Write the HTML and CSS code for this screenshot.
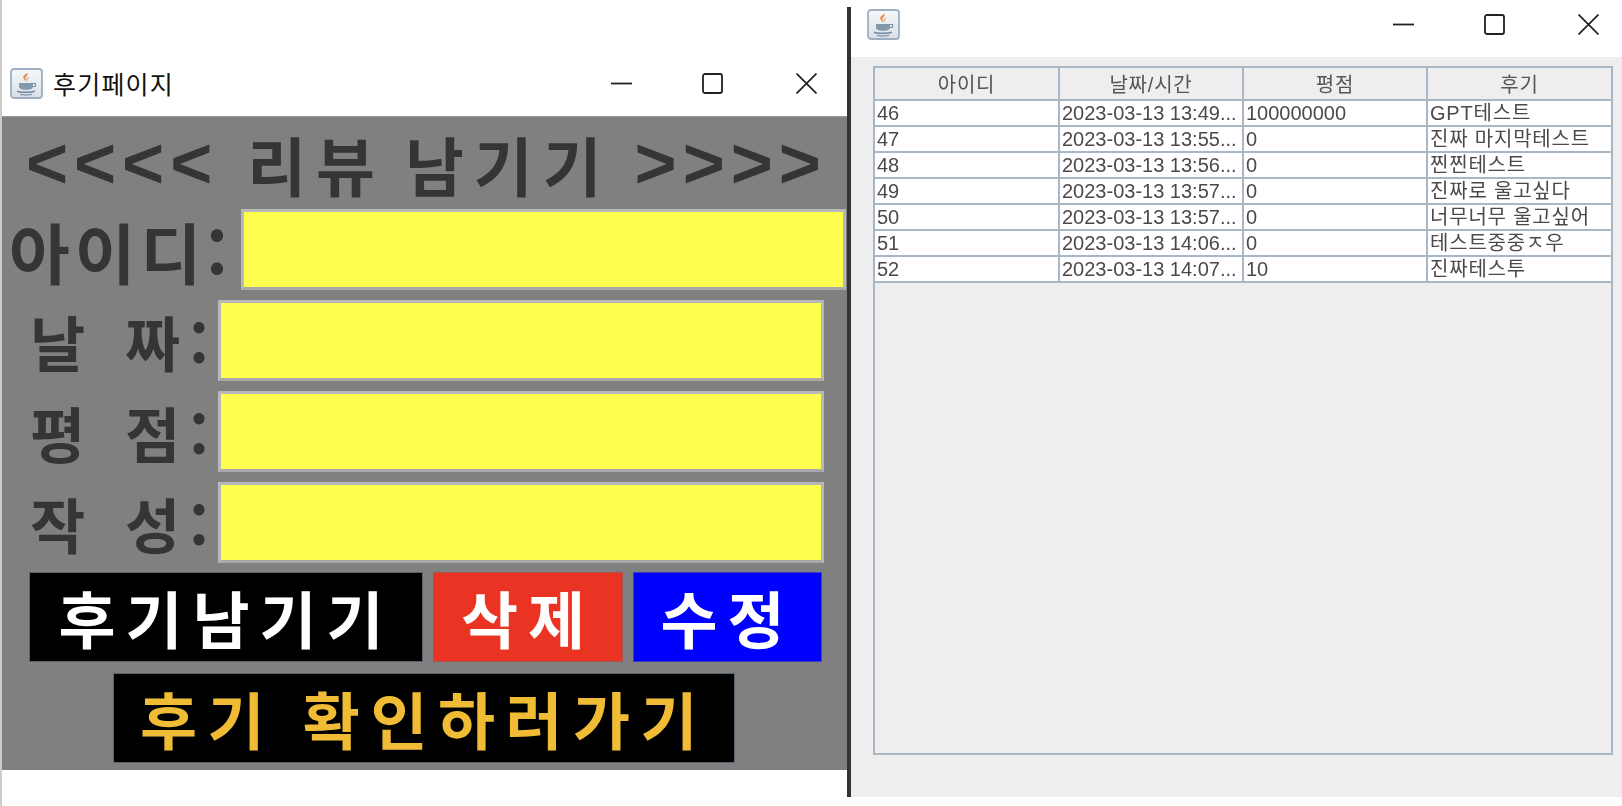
FILE: index.html
```html
<!DOCTYPE html>
<html lang="ko">
<head>
    <meta charset="UTF-8">
    <meta name="viewport" content="width=device-width, initial-scale=1.0">
    <title>후기페이지</title>
    <link rel="stylesheet" href="styles.css">
</head>
<body>
    <svg class="sprite" width="0" height="0">
        <defs>
            <linearGradient id="iconbg" x1="0" y1="0" x2="0" y2="1">
                <stop offset="0" stop-color="#f6f8fa"/>
                <stop offset="1" stop-color="#d9e0e6"/>
            </linearGradient>
            <symbol id="java" viewBox="0 0 33 31">
                <rect x="1" y="1" width="31" height="29" rx="3" fill="url(#iconbg)" stroke="#9db0c2" stroke-width="1.800"/>
                <path d="M17.500 4.500c1.500 2.500-3 4-2 6.500.4 1 1.200 1.800 1.500 2.500-2.800-1.500-4.500-3.300-3.500-5.500.7-1.400 3.500-2 4-3.500z" fill="#e8894a"/>
                <path d="M19.500 8.500c-.5 1.500-2 2-1.800 3.200.1.600.5 1 .8 1.300-1.500-.6-2.500-1.600-1.900-2.800.5-.8 2.300-1 2.900-1.700z" fill="#eca777"/>
                <path d="M9 15h14v3.500c0 2.200-2.500 3.200-7 3.200s-7-1-7-3.200z" fill="#8298ac"/>
                <path d="M23 15.500h2.500v3H23" fill="none" stroke="#7e94a8" stroke-width="1.200"/>
                <path d="M7 23.200c3.500 1.400 14 1.400 18 0" fill="none" stroke="#7189a0" stroke-width="1.600"/>
                <path d="M10 26.200c3 .8 9 .8 12 0" fill="none" stroke="#8ea2b5" stroke-width="1.400"/>
            </symbol>
            <symbol id="win-min" viewBox="0 0 21 21">
                <path d="M0 10.500h21" stroke="#222" stroke-width="1.800"/>
            </symbol>
            <symbol id="win-max" viewBox="0 0 21 21">
                <rect x="1" y="1" width="19" height="19" rx="2" fill="none" stroke="#222" stroke-width="1.800"/>
            </symbol>
            <symbol id="win-close" viewBox="0 0 21 21">
                <path d="M.5.500l20 20M20.500.500l-20 20" stroke="#222" stroke-width="1.700"/>
            </symbol>
        </defs>
    </svg>

    <div class="review-window">
        <div class="titlebar review-titlebar">
            <svg class="app-icon"><use href="#java"/></svg>
            <span class="window-title">후기페이지</span>
            <div class="window-buttons">
                <svg class="win-btn"><use href="#win-min"/></svg>
                <svg class="win-btn"><use href="#win-max"/></svg>
                <svg class="win-btn win-btn-close"><use href="#win-close"/></svg>
            </div>
        </div>
        <div class="review-panel">
            <h1 class="heading">
                <span class="arrows arrows-left">&lt;&lt;&lt;&lt;</span>
                <span class="heading-words">
                    <span>리뷰</span>
                    <span>남기기</span>
                </span>
                <span class="arrows arrows-right">&gt;&gt;&gt;&gt;</span>
            </h1>
            <div class="row row-id">
                <label class="field-label label-id">아이디:</label>
                <div class="field"></div>
            </div>
            <div class="row">
                <label class="field-label">날 짜:</label>
                <div class="field"></div>
            </div>
            <div class="row">
                <label class="field-label">평 점:</label>
                <div class="field"></div>
            </div>
            <div class="row row-last">
                <label class="field-label">작 성:</label>
                <div class="field"></div>
            </div>
            <div class="actions">
                <button class="btn btn-save">후기남기기</button>
                <button class="btn btn-delete">삭제</button>
                <button class="btn btn-edit">수정</button>
            </div>
            <button class="btn btn-go">후기 확인하러가기</button>
        </div>
    </div>

    <div class="divider"></div>

    <div class="list-window">
        <div class="titlebar list-titlebar">
            <svg class="app-icon"><use href="#java"/></svg>
            <div class="window-buttons">
                <svg class="win-btn"><use href="#win-min"/></svg>
                <svg class="win-btn"><use href="#win-max"/></svg>
                <svg class="win-btn win-btn-close"><use href="#win-close"/></svg>
            </div>
        </div>
        <div class="list-content">
            <div class="table-frame">
                <table class="review-table">
                    <thead>
                        <tr><th class="kr">아이디</th><th class="kr">날짜/시간</th><th class="kr">평점</th><th class="kr">후기</th></tr>
                    </thead>
                    <tbody>
                        <tr><td>46</td><td>2023-03-13 13:49...</td><td>100000000</td><td class="kr">GPT테스트</td></tr>
                        <tr><td>47</td><td>2023-03-13 13:55...</td><td>0</td><td class="kr">진짜 마지막테스트</td></tr>
                        <tr><td>48</td><td>2023-03-13 13:56...</td><td>0</td><td class="kr">찐찐테스트</td></tr>
                        <tr><td>49</td><td>2023-03-13 13:57...</td><td>0</td><td class="kr">진짜로 울고싶다</td></tr>
                        <tr><td>50</td><td>2023-03-13 13:57...</td><td>0</td><td class="kr">너무너무 울고싶어</td></tr>
                        <tr><td>51</td><td>2023-03-13 14:06...</td><td>0</td><td class="kr">테스트중중ㅈ우</td></tr>
                        <tr><td>52</td><td>2023-03-13 14:07...</td><td>10</td><td class="kr">진짜테스투</td></tr>
                    </tbody>
                </table>
            </div>
        </div>
    </div>
</body>
</html>
```

FILE: styles.css
```css
* {
    box-sizing: border-box;
}
html, body {
    margin: 0;
    height: 806px;
    overflow: hidden;
}
body {
    display: flex;
    background-color: #fff;
    font-family: "Noto Sans CJK KR", "Noto Sans", sans-serif;
    filter: blur(0.6px);
}
.sprite {
    position: absolute;
}

/* window chrome */
.titlebar {
    display: flex;
    align-items: center;
    background-color: #fff;
}
.app-icon {
    width: 33px;
    height: 31px;
    flex: none;
}
.window-title {
    margin-left: 10px;
    font-size: 25px;
    line-height: 30px;
    letter-spacing: 1.200px;
    color: #111;
}
.window-buttons {
    display: flex;
    gap: 70px;
    margin-left: auto;
}
.win-btn {
    width: 21px;
    height: 21px;
}
.win-btn-close {
    margin-left: 3px;
}

/* left window */
.review-window {
    width: 847px;
    height: 806px;
    padding-top: 50px;
    border-left: 2px solid #ccc;
}
.review-titlebar {
    height: 66px;
    padding: 0 30px 0 8px;
}
.review-panel {
    display: flex;
    flex-direction: column;
    height: 654px;
    background-color: #808080;
    border-top: 1px solid #999;
}
.heading {
    display: flex;
    align-items: center;
    height: 92px;
    margin: 0;
    padding: 0 0 0 24px;
    font-size: 64px;
    line-height: 1;
    font-weight: 700;
    letter-spacing: 10px;
    white-space: nowrap;
    color: #353535;
}
.heading .arrows {
    font-family: "Liberation Sans", sans-serif;
    font-size: 72px;
    letter-spacing: 6px;
}
.arrows-left {
    margin-right: 29px;
}
.arrows-right {
    margin-left: 23px;
}
.heading-words {
    display: flex;
    gap: 20px;
}
.row {
    display: flex;
    align-items: center;
    height: 81px;
    margin-bottom: 10px;
    padding-left: 28px;
}
.row-id {
    padding-left: 7px;
}
.row-last {
    margin-bottom: 9px;
}
.field-label {
    width: 188px;
    font-size: 60px;
    line-height: 1;
    font-weight: 700;
    letter-spacing: 9px;
    word-spacing: 5px;
    white-space: nowrap;
    color: #353535;
}
.label-id {
    width: 232px;
    font-size: 66px;
    letter-spacing: 5px;
}
.field {
    width: 606px;
    height: 81px;
    background-color: #ffff50;
    border: 3px solid #b8b8b8;
    border-bottom-color: #a8a8a8;
}
.row-id .field {
    width: 605px;
}
.actions {
    display: flex;
    gap: 10px;
    margin-bottom: 11px;
    padding-left: 27px;
}
.btn {
    display: block;
    height: 90px;
    padding: 0;
    border: 1px solid #5a6470;
    font-family: inherit;
    font-size: 62px;
    line-height: 1;
    font-weight: 700;
    letter-spacing: 10px;
    white-space: nowrap;
    color: #fff;
}
.btn-save {
    width: 394px;
    background-color: #000;
}
.btn-delete {
    width: 190px;
    background-color: #ea3323;
    border-color: #a5584f;
}
.btn-edit {
    width: 189px;
    background-color: #0000ff;
    border-color: #3c3cc0;
}
.btn-go {
    width: 622px;
    margin-left: 111px;
    letter-spacing: 10.500px;
    background-color: #000;
    color: #f0bc35;
}

/* divider between the two screenshots */
.divider {
    width: 4px;
    height: 790px;
    margin-top: 7px;
    flex: none;
    background-color: #333;
}

/* right window */
.list-window {
    flex: 1;
    height: 797px;
}
.list-titlebar {
    height: 57px;
    padding: 0 23px 8px 16px;
}
.list-content {
    height: 740px;
    padding: 9px 9px 42px 22px;
    background-color: #eee;
}
.table-frame {
    height: 689px;
    border: 2px solid #a9b6c3;
}
.review-table {
    width: 100%;
    table-layout: fixed;
    border-collapse: collapse;
    font-family: "Liberation Sans", "Noto Sans CJK KR", sans-serif;
    font-size: 20px;
    color: #4a4a4a;
}
.review-table th {
    height: 32px;
    padding: 0;
    font-weight: 400;
    color: #555;
    background-color: #eee;
    border: 2px solid #a9b6c3;
    border-top: 0;
}
.review-table td {
    height: 25.950px;
    padding: 0 0 0 2px;
    line-height: 22px;
    white-space: nowrap;
    overflow: hidden;
    background-color: #fff;
    border: 2px solid #a9b6c3;
}
.review-table .kr {
    letter-spacing: 0.800px;
}
.review-table th:first-child,
.review-table td:first-child {
    border-left: 0;
}
.review-table th:last-child,
.review-table td:last-child {
    border-right: 0;
}
```
